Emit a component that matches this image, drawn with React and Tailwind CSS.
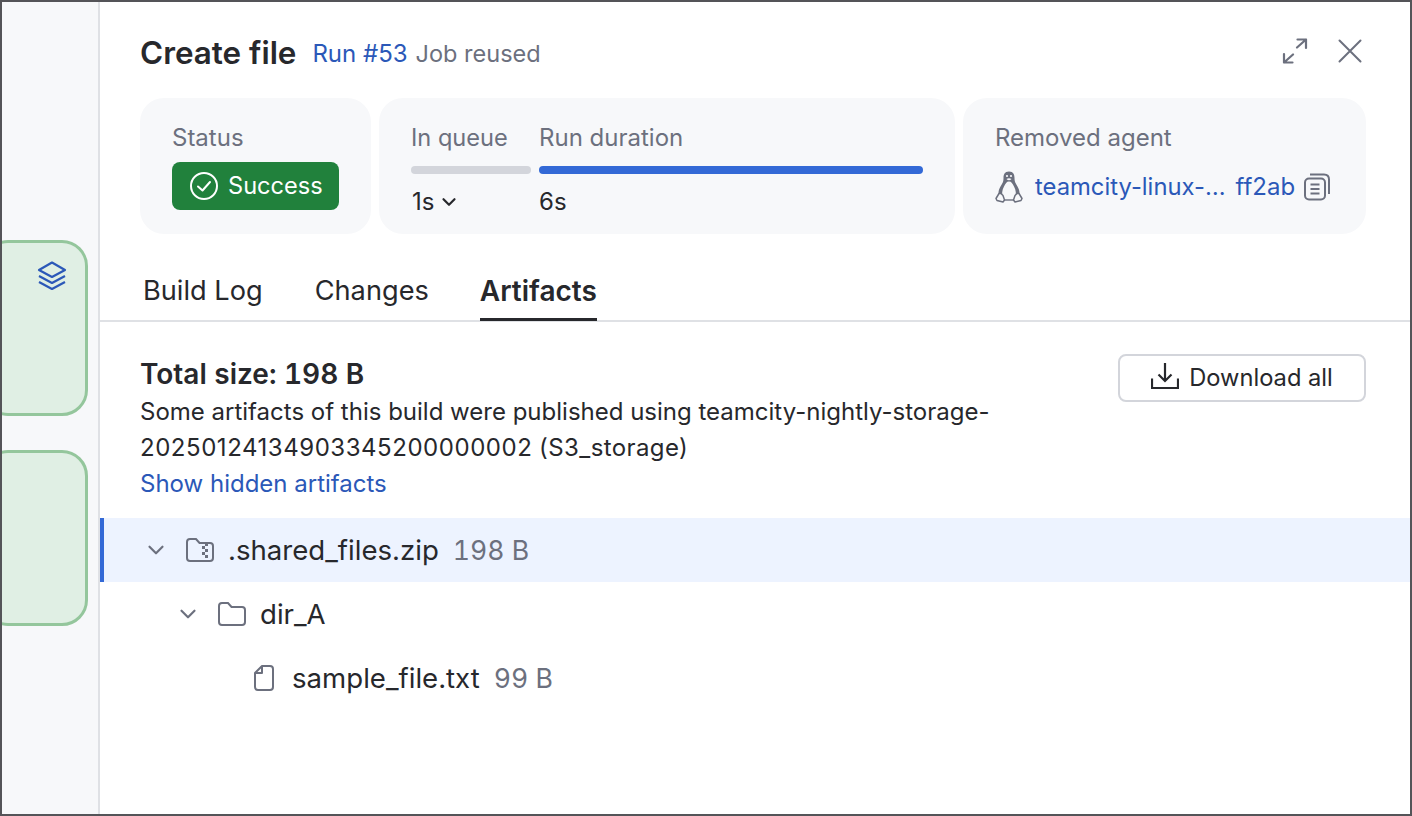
import React from 'react'
import { ChevronDown } from 'lucide-react'

const FONT = "font-['Inter','Liberation_Sans',sans-serif]"

const Tab = ({ label, active }) => (
  <div className={`h-[51px] flex items-start pt-[4px] leading-[34px] ${active ? 'text-[28px] font-semibold border-b-[3px] border-[#27282c] -ml-[1px]' : 'text-[27.2px]'}`}>
    <span className="text-[#27282c]">{label}</span>
  </div>
)

const LayersIcon = () => (
  <svg width="32" height="32" viewBox="0 0 32 32" fill="none" stroke="#2b58b8" strokeWidth="2.2" strokeLinejoin="round">
    <path d="M16 2.5 L29 10 L16 17 L3 10 Z" />
    <path d="M3 16 L16 23 L29 16" />
    <path d="M3 22 L16 29 L29 22" />
  </svg>
)

const SuccessIcon = () => (
  <svg width="28" height="28" viewBox="0 0 28 28" fill="none" stroke="white" strokeWidth="2">
    <circle cx="14" cy="14" r="13" />
    <path d="M8 14.5 L12.5 18.5 L20 10" strokeLinecap="round" strokeLinejoin="round" />
  </svg>
)

const ExpandIcon = () => (
  <svg width="26" height="26" viewBox="0 0 26 26" fill="none" stroke="#6c707e" strokeWidth="2.2" strokeLinecap="round" strokeLinejoin="round">
    <path d="M15 9.5 L24 1.5 M15.5 1.5 H24 V10" />
    <path d="M11 16.5 L2 24.5 M2 16 V24.5 H10.5" />
  </svg>
)

const CloseIcon = () => (
  <svg width="24" height="24" viewBox="0 0 24 24" fill="none" stroke="#6c707e" strokeWidth="2" strokeLinecap="round">
    <path d="M1.5 1.5 L22.5 22.5 M22.5 1.5 L1.5 22.5" />
  </svg>
)

const CopyIcon = () => (
  <svg width="26" height="28" viewBox="0 0 26 28" fill="none" stroke="#6c707e" strokeWidth="2">
    <rect x="1" y="5.5" width="20" height="21" rx="4" />
    <path d="M6.5 11.5 H15.5 M6.5 16 H15.5 M6.5 20.5 H15.5" />
    <path d="M6 1.5 H20 Q25 1.5 25 6.5 V21" />
  </svg>
)

// penguin: grey silhouette, light belly, outlined feet
const TuxIcon = () => (
  <svg width="28" height="32" viewBox="0 0 28 32" fill="none">
    <path d="M14 0.5 C9.5 0.5 8.5 3.5 8.5 7 C8.5 11 7.5 12 5.5 15.5 C3.5 19 3 22 4 25 L24 25 C25 22 24.5 19 22.5 15.5 C20.5 12 19.5 11 19.5 7 C19.5 3.5 18.5 0.5 14 0.5 Z" fill="#6c707e" />
    <path d="M14 10.5 C11.5 10.5 10.5 12.5 9 15.5 C7 19 6.5 23 8 28 H20 C21.5 23 21 19 19 15.5 C17.5 12.5 16.5 10.5 14 10.5 Z" fill="#f7f8fa" />
    <circle cx="12" cy="5" r="1.1" fill="#f7f8fa" />
    <circle cx="16" cy="5" r="1.1" fill="#f7f8fa" />
    <path d="M11.5 8 Q14 6.5 16.5 8 Q14 10.5 11.5 8 Z" fill="#f7f8fa" />
    <path d="M9 29 H19" stroke="#6c707e" strokeWidth="1.4" />
    <path d="M4 22.5 L1 27.5 L2 29.5 L8 31 L9.5 29 L8 24.5 L6 22.5 Z" fill="#f7f8fa" stroke="#6c707e" strokeWidth="1.5" strokeLinejoin="round" />
    <path d="M24 22.5 L27 27.5 L26 29.5 L20 31 L18.5 29 L20 24.5 L22 22.5 Z" fill="#f7f8fa" stroke="#6c707e" strokeWidth="1.5" strokeLinejoin="round" />
  </svg>
)

const DownloadIcon = () => (
  <svg className="-mt-[2px]" width="28" height="28" viewBox="0 0 28 28" fill="none" stroke="#27282c" strokeWidth="2.2">
    <path d="M14 0 V18 M7.5 11.5 L14 18 L20.5 11.5" />
    <path d="M1 15.5 V25 H27 V15.5" />
  </svg>
)

const ZipFolderIcon = () => (
  <svg width="28" height="24" viewBox="0 0 28 24" fill="none" stroke="#6c707e" strokeWidth="2">
    <path d="M1 4 Q1 1 4 1 H10 L13.5 5 H24 Q27 5 27 8 V20 Q27 23 24 23 H4 Q1 23 1 20 Z" />
    <path d="M19 6.5 H22 M16 9.5 H19 M19 12.5 H22 M16 15.5 H19 M19 18.5 H22" strokeWidth="3" />
  </svg>
)

const FolderIcon = () => (
  <svg width="28" height="24" viewBox="0 0 28 24" fill="none" stroke="#6c707e" strokeWidth="2">
    <path d="M1 4 Q1 1 4 1 H10 L13.5 5 H24 Q27 5 27 8 V20 Q27 23 24 23 H4 Q1 23 1 20 Z" />
  </svg>
)

const FileIcon = () => (
  <svg width="20" height="26" viewBox="0 0 20 26" fill="none" stroke="#6c707e" strokeWidth="2" strokeLinejoin="round">
    <path d="M8 1 H16 Q19 1 19 4 V22 Q19 25 16 25 H4 Q1 25 1 22 V8 Z" />
    <path d="M8 1 V8 H1" />
  </svg>
)

const Row = ({ pad, selected, chevron, icon, name, size }) => (
  <div className={`h-[64px] flex items-center border-l-[4px] ${selected ? 'bg-[#edf3ff] border-[#3369d6]' : 'border-transparent'}`} style={{ paddingLeft: pad }}>
    <div className="w-[32px] shrink-0 flex items-center">
      {chevron && <ChevronDown size={26} strokeWidth={2} color="#6c707e" />}
    </div>
    <div className="w-[32px] shrink-0 flex justify-center ml-[9px] mr-[12px]">{icon}</div>
    <span className="text-[27.6px] text-[#27282c] pt-[2px]">{name}</span>
    <span className="text-[26.6px] text-[#6c707e] ml-[14px] pt-[2px] tabular-nums">{size}</span>
  </div>
)

const GreenBox = ({ children }) => (
  <div className="h-[176px] w-[106px] -ml-[20px] rounded-[26px] border-[3px] border-[#94c69c] bg-[#e0efe4] flex justify-end pt-[17px] pr-[17px]">
    {children}
  </div>
)

export default function App() {
  return (
    <div className={`w-[1412px] h-[816px] overflow-hidden flex border-2 border-[#545458] bg-white ${FONT}`}>
      <aside className="w-[98px] shrink-0 bg-[#f7f8fa] border-r-2 border-[#dfe1e5] overflow-hidden pt-[238px] flex flex-col gap-[34px]">
        <GreenBox><LayersIcon /></GreenBox>
        <GreenBox />
      </aside>

      <main className="flex-1 flex flex-col">
        <header className="h-[96px] flex items-center px-[40px] pt-[7px]">
          <h1 className="text-[31.4px] font-semibold text-[#27282c] mr-[16px]">Create file</h1>
          <span className="text-[24px] text-[#2b58b8] mr-[8px]">Run #53</span>
          <span className="text-[23.5px] text-[#6c707e]">Job reused</span>
          <div className="ml-auto flex items-center gap-[30px] mr-[8px] -mt-[6px]">
            <ExpandIcon />
            <CloseIcon />
          </div>
        </header>

        <div className="flex gap-[8px] h-[136px] pl-[40px] pr-[44px]">
          <div className="w-[231px] rounded-[24px] bg-[#f7f8fa] pl-[32px] pt-[24px]">
            <div className="text-[24px] leading-[32px] text-[#6c707e]">Status</div>
            <div className="mt-[8px] h-[48px] w-[167px] rounded-[8px] bg-[#21813c] flex items-center pl-[18px] gap-[10px] text-white text-[23.6px]">
              <SuccessIcon />
              <span>Success</span>
            </div>
          </div>
          <div className="w-[576px] rounded-[24px] bg-[#f7f8fa] pl-[32px] pr-[32px] pt-[24px] flex gap-[8px]">
            <div className="w-[120px]">
              <div className="text-[23.6px] leading-[32px] text-[#6c707e]">In queue</div>
              <div className="mt-[12px] h-[8px] rounded-full bg-[#d3d5db]" />
              <div className="mt-[12px] flex items-center gap-[4px] text-[24px] leading-[32px] text-[#27282c] pl-[1px]">
                1s
                <ChevronDown size={22} strokeWidth={2.4} />
              </div>
            </div>
            <div className="flex-1">
              <div className="text-[24px] leading-[32px] text-[#6c707e]">Run duration</div>
              <div className="mt-[12px] h-[8px] rounded-full bg-[#3369d6]" />
              <div className="mt-[12px] text-[24px] leading-[32px] text-[#27282c]">6s</div>
            </div>
          </div>
          <div className="flex-1 rounded-[24px] bg-[#f7f8fa] pl-[32px] pt-[24px]">
            <div className="text-[24px] leading-[32px] text-[#6c707e]">Removed agent</div>
            <div className="mt-[17px] flex items-center text-[24px] leading-[32px] text-[#2b58b8]">
              <TuxIcon />
              <span className="ml-[12px] text-[23.8px]">teamcity-linux-…</span>
              <span className="ml-[10px]">ff2ab</span>
              <span className="ml-[9px]"><CopyIcon /></span>
            </div>
          </div>
        </div>

        <nav className="mt-[36px] h-[52px] flex gap-[52px] pl-[43px] border-b-2 border-[#dfe1e5]">
          <Tab label="Build Log" />
          <Tab label="Changes" />
          <Tab label="Artifacts" active />
        </nav>

        <section className="flex justify-between pl-[40px] pr-[44px] pt-[32px]">
          <div className="w-[880px] text-[24px] leading-[36px] text-[#27282c]">
            <div className="text-[28px] leading-[40px] font-semibold tabular-nums">Total size: 198 B</div>
            <div>
              Some artifacts of this build were published using teamcity-nightly-storage-
              <span className="tracking-[0.54px]">20250124134903345200000002</span>{' '}
              <span className="tracking-[0.4px]">(S3_storage)</span>
            </div>
            <div className="text-[#2b58b8]">Show hidden artifacts</div>
          </div>
          <button className="h-[48px] w-[248px] rounded-[8px] border-2 border-[#d3d5db] flex items-center justify-center gap-[10px] text-[23.7px] text-[#27282c]">
            <DownloadIcon />
            Download all
          </button>
        </section>

        <div className="mt-[16px] flex flex-col">
          <Row pad={39} selected chevron icon={<ZipFolderIcon />} name=".shared_files.zip" size="198 B" />
          <Row pad={71} chevron icon={<FolderIcon />} name="dir_A" />
          <Row pad={103} icon={<FileIcon />} name="sample_file.txt" size="99 B" />
        </div>
      </main>
    </div>
  )
}
